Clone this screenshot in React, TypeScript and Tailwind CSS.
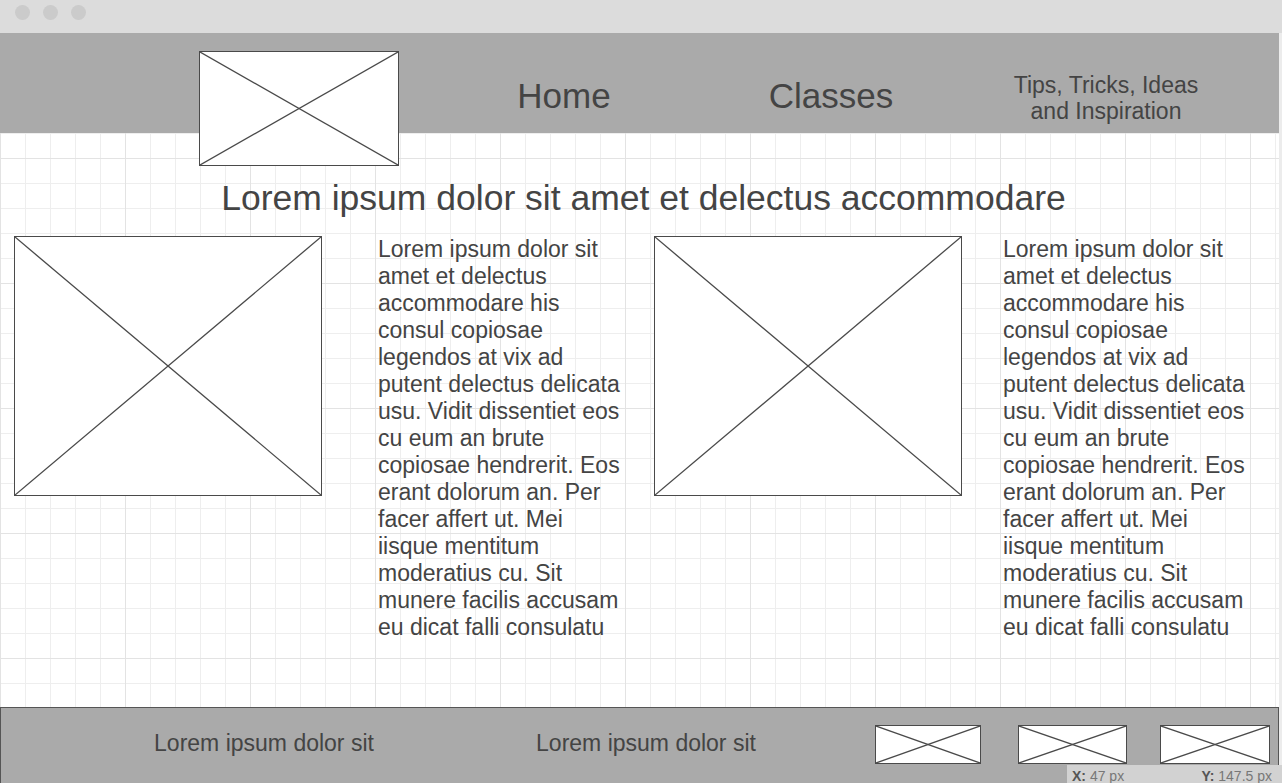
import React from 'react';

const Placeholder: React.FC<{ className?: string }> = ({ className = '' }) => (
  <div className={`relative bg-white border-[#4a4a4a] ${className}`}>
    <svg className="absolute inset-0 w-full h-full" viewBox="0 0 100 100" preserveAspectRatio="none">
      <line x1="0" y1="0" x2="100" y2="100" stroke="#4a4a4a" strokeWidth="1.3" vectorEffect="non-scaling-stroke" />
      <line x1="100" y1="0" x2="0" y2="100" stroke="#4a4a4a" strokeWidth="1.3" vectorEffect="non-scaling-stroke" />
    </svg>
  </div>
);

const lorem =
  'Lorem ipsum dolor sit amet et delectus accommodare his consul copiosae legendos at vix ad putent delectus delicata usu. Vidit dissentiet eos cu eum an brute copiosae hendrerit. Eos erant dolorum an. Per facer affert ut. Mei iisque mentitum moderatius cu. Sit munere facilis accusam eu dicat falli consulatu';

const App: React.FC = () => {
  return (
    <div className="relative w-[1282px] h-[783px] overflow-hidden bg-white font-['Liberation_Sans',Arial,sans-serif] text-[#444]">
      {/* window chrome */}
      <div className="h-[33px] bg-[#dcdcdc] flex items-start gap-[13px] pl-[15px] pt-[5px]">
        <span className="w-[15px] h-[15px] rounded-full bg-[#cbcbcb]" />
        <span className="w-[15px] h-[15px] rounded-full bg-[#cbcbcb]" />
        <span className="w-[15px] h-[15px] rounded-full bg-[#cbcbcb]" />
      </div>

      <div className="flex h-[750px]">
        <div className="w-[1279px] flex flex-col bg-[image:linear-gradient(to_right,#e3e3e3_1px,transparent_1px),linear-gradient(to_bottom,#e3e3e3_1px,transparent_1px),linear-gradient(to_right,#eeeeee_1px,transparent_1px),linear-gradient(to_bottom,#eeeeee_1px,transparent_1px)] bg-[size:125px_125px,125px_125px,25px_25px,25px_25px]">
          {/* header */}
          <header className="h-[100px] shrink-0 bg-[#aaaaaa] flex items-start pl-[199px]">
            <Placeholder className="w-[200px] h-[115px] mt-[18px] border-[1.5px] z-10" />
            <div className="ml-[65px] w-[200px] pt-[45px] text-center text-[35px] leading-none">Home</div>
            <div className="ml-[67px] w-[200px] pt-[45px] text-center text-[35px] leading-none">Classes</div>
            <div className="ml-[75px] w-[200px] pt-[39px] text-center text-[23px] leading-[26px]">
              Tips, Tricks, Ideas
              <br />
              and Inspiration
            </div>
          </header>

          <h1 className="mt-[48px] pl-[8px] text-center text-[35.5px] leading-none">
            Lorem ipsum dolor sit amet et delectus accommodare
          </h1>

          <div className="mt-[19px] flex items-start pl-[14px]">
            <Placeholder className="w-[308px] h-[260px] border" />
            <p className="ml-[56px] w-[246px] text-[23px] leading-[27px]">{lorem}</p>
            <Placeholder className="ml-[30px] w-[308px] h-[260px] border" />
            <p className="ml-[41px] w-[246px] text-[23px] leading-[27px]">{lorem}</p>
          </div>

          {/* footer */}
          <footer className="mt-auto h-[76px] shrink-0 bg-[#aaaaaa] border-t border-l border-r border-[#555] flex items-start">
            <div className="ml-[152px] w-[222px] pt-[22px] text-center text-[23px] leading-[27px]">Lorem ipsum dolor sit</div>
            <div className="ml-[160px] w-[222px] pt-[22px] text-center text-[23px] leading-[27px]">Lorem ipsum dolor sit</div>
            <Placeholder className="ml-[118px] mt-[17px] w-[106px] h-[39px] border-[1.5px]" />
            <Placeholder className="ml-[37px] mt-[17px] w-[109px] h-[39px] border-[1.5px]" />
            <Placeholder className="ml-[33px] mt-[17px] w-[110px] h-[39px] border-[1.5px]" />
          </footer>
        </div>
        <div className="w-[3px] bg-[#ececec]" />
      </div>

      {/* cursor coordinates */}
      <div className="absolute right-0 bottom-0 w-[215px] h-[18px] bg-[#d2d2d2] flex justify-between pl-[5px] pr-[10px] pt-[4px] text-[14px] leading-none text-[#777]">
        <span>
          <b className="text-[#555]">X:</b> 47 px
        </span>
        <span>
          <b className="text-[#555]">Y:</b> 147.5 px
        </span>
      </div>
    </div>
  );
};

export default App;
